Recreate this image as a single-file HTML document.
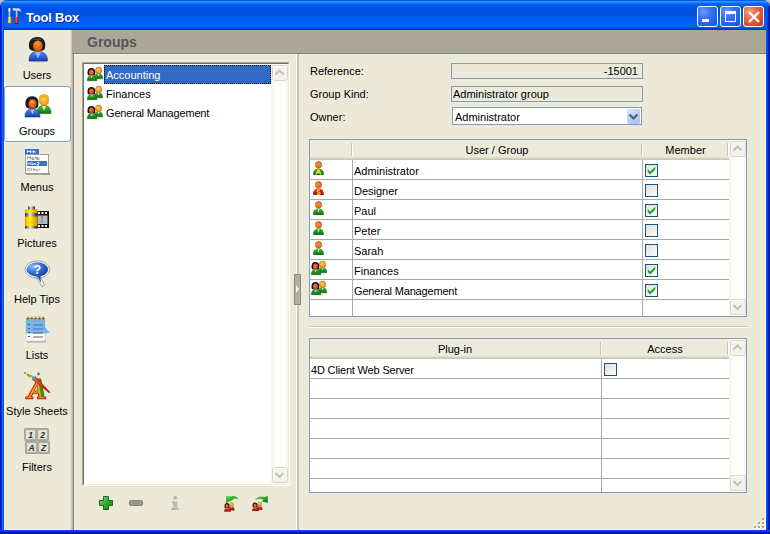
<!DOCTYPE html>
<html><head><meta charset="utf-8">
<style>
*{box-sizing:border-box}
html,body{margin:0;padding:0}
body{width:770px;height:534px;overflow:hidden;position:relative;background:#c4c4c4;font-family:"Liberation Sans",sans-serif;font-size:11px;color:#000}
.a{position:absolute}
.t{position:absolute;white-space:nowrap;line-height:13px}
</style></head><body>
<svg width="0" height="0" style="position:absolute">
<defs>
<radialGradient id="gFaceO" cx="0.4" cy="0.35" r="0.7"><stop offset="0" stop-color="#FFA040"/><stop offset="1" stop-color="#D85010"/></radialGradient>
<radialGradient id="gFaceR" cx="0.4" cy="0.35" r="0.7"><stop offset="0" stop-color="#FF8030"/><stop offset="1" stop-color="#C83008"/></radialGradient>
<radialGradient id="gFaceY" cx="0.4" cy="0.35" r="0.7"><stop offset="0" stop-color="#FFD060"/><stop offset="1" stop-color="#E08A10"/></radialGradient>
<linearGradient id="gGreen" x1="0" y1="0" x2="0" y2="1"><stop offset="0" stop-color="#40B040"/><stop offset="1" stop-color="#087008"/></linearGradient>
<linearGradient id="gBlue" x1="0" y1="0" x2="0" y2="1"><stop offset="0" stop-color="#6090F0"/><stop offset="1" stop-color="#1840B0"/></linearGradient>
<linearGradient id="gRed" x1="0" y1="0" x2="0" y2="1"><stop offset="0" stop-color="#F03020"/><stop offset="1" stop-color="#A00808"/></linearGradient>
<linearGradient id="gChk" x1="0" y1="0" x2="1" y2="1"><stop offset="0" stop-color="#DCDCD7"/><stop offset="1" stop-color="#FFFFFF"/></linearGradient>
<symbol id="uG" viewBox="0 0 16 16"><path d="M2.1 14.2C2 10.4 4.5 8.5 7.5 8.5S13 10.4 12.9 14.2Q12.9 15 12 15H3Q2.1 15 2.1 14.2Z" fill="url(#gGreen)"/><path d="M6.3 9L7.5 13L8.7 9Z" fill="#B8E0A8"/><ellipse cx="7.5" cy="4.8" rx="3.4" ry="3.8" fill="url(#gFaceO)"/><path d="M4.1 5.3C3.5 0.7 11.5 0.7 10.9 5.3C10.5 3.9 9 3.2 7.5 3.4C6 3.2 4.5 3.9 4.1 5.3Z" fill="#B8822C"/></symbol>
<symbol id="uA" viewBox="0 0 16 16"><path d="M2.1 14.2C2 10.4 4.5 8.5 7.5 8.5S13 10.4 12.9 14.2Q12.9 15 12 15H3Q2.1 15 2.1 14.2Z" fill="url(#gGreen)"/><path d="M5 14.5L7.5 9.5L10 14.5M5.8 12.5H9.2" stroke="#F8E020" stroke-width="1.3" fill="none"/><ellipse cx="7.5" cy="4.8" rx="3.4" ry="3.8" fill="url(#gFaceO)"/><path d="M4.1 5.3C3.5 0.7 11.5 0.7 10.9 5.3C10.5 3.9 9 3.2 7.5 3.4C6 3.2 4.5 3.9 4.1 5.3Z" fill="#B8822C"/></symbol>
<symbol id="uS" viewBox="0 0 16 16"><path d="M2.1 14.2C2 10.4 4.5 8.5 7.5 8.5S13 10.4 12.9 14.2Q12.9 15 12 15H3Q2.1 15 2.1 14.2Z" fill="url(#gRed)"/><path d="M9.2 10.3C8 9.5 5.8 9.8 6.2 11.3C6.5 12.3 9 12.2 9 13.4C9 14.6 6.6 14.6 5.8 13.8" stroke="#F8D020" stroke-width="1.4" fill="none"/><ellipse cx="7.5" cy="4.8" rx="3.4" ry="3.8" fill="url(#gFaceO)"/><path d="M4.1 5.3C3.5 0.7 11.5 0.7 10.9 5.3C10.5 3.9 9 3.2 7.5 3.4C6 3.2 4.5 3.9 4.1 5.3Z" fill="#B8822C"/></symbol>
<symbol id="grp" viewBox="0 0 16 16"><path d="M7.3 12.8C7.3 9.2 9 7.6 11.5 7.6S15.7 9.2 15.7 12.8Z" fill="url(#gGreen)" stroke="#0A5A0A" stroke-width="0.5"/><path d="M10.4 7.9L11.5 10.3L12.6 7.9Z" fill="#D0F0C0"/><ellipse cx="11.6" cy="4.4" rx="3.1" ry="3.3" fill="url(#gFaceY)" stroke="#A86A10" stroke-width="0.6"/><path d="M0.3 14.7C0.3 11.2 2 9.4 4.7 9.4S9.9 11.2 9.9 14.7Z" fill="url(#gGreen)" stroke="#0A5A0A" stroke-width="0.5"/><path d="M3.6 9.6L4.7 12.2L5.8 9.6Z" fill="#D0F0C0"/><path d="M0.9 9.3C-0.3 4.5 1.3 2 4.4 2S9.1 4.5 7.9 9.3Z" fill="#151515"/><ellipse cx="4.5" cy="6.6" rx="2.4" ry="3" fill="url(#gFaceR)"/></symbol>
<symbol id="grpR" viewBox="0 0 16 16"><path d="M7.3 12.8C7.3 9.2 9 7.6 11.5 7.6S15.7 9.2 15.7 12.8Z" fill="url(#gRed)" stroke="#700808" stroke-width="0.5"/><path d="M10.4 7.9L11.5 10.3L12.6 7.9Z" fill="#F0C0B0"/><ellipse cx="11.6" cy="4.4" rx="3.1" ry="3.3" fill="url(#gFaceY)" stroke="#A86A10" stroke-width="0.6"/><path d="M0.3 14.7C0.3 11.2 2 9.4 4.7 9.4S9.9 11.2 9.9 14.7Z" fill="url(#gRed)" stroke="#700808" stroke-width="0.5"/><path d="M3.6 9.6L4.7 12.2L5.8 9.6Z" fill="#F0C0B0"/><path d="M0.9 9.3C-0.3 4.5 1.3 2 4.4 2S9.1 4.5 7.9 9.3Z" fill="#151515"/><ellipse cx="4.5" cy="6.6" rx="2.4" ry="3" fill="url(#gFaceR)"/></symbol>
<symbol id="chk" viewBox="0 0 13 13"><rect x="0.5" y="0.5" width="12" height="12" fill="url(#gChk)" stroke="#1C5180"/></symbol>
<symbol id="chkY" viewBox="0 0 13 13"><rect x="0.5" y="0.5" width="12" height="12" fill="url(#gChk)" stroke="#1C5180"/><path d="M2.8 5.3L5.2 7.6L10.2 2.8V5.6L5.2 10.4L2.8 8Z" fill="#21A121"/></symbol>
<symbol id="sbUp" viewBox="0 0 17 17"><rect x="1.5" y="1.5" width="15" height="15" rx="2" fill="#F3F2EB" stroke="#D8D5C6"/><path d="M2.5 14.5V3.5Q2.5 2.5 3.5 2.5H14.5" stroke="#FBFBF8" fill="none"/><path d="M4.5 10.5L8.5 6.5L12.5 10.5" stroke="#C6C3B5" stroke-width="2" fill="none"/></symbol>
<symbol id="sbDn" viewBox="0 0 17 17"><rect x="1.5" y="0.5" width="15" height="15" rx="2" fill="#F3F2EB" stroke="#D8D5C6"/><path d="M2.5 13.5V2.5Q2.5 1.5 3.5 1.5H14.5" stroke="#FBFBF8" fill="none"/><path d="M4.5 6L8.5 10L12.5 6" stroke="#C6C3B5" stroke-width="2" fill="none"/></symbol>
</defs></svg>
<!-- title bar -->
<div class="a" style="left:0;top:0;width:770px;height:30px;border-radius:6px 6px 0 0;background:linear-gradient(to bottom,#0A5AE8 0px,#0A5AE8 1px,#3A90FF 1px,#3A90FF 2px,#2080FF 2px,#2080FF 3px,#0070FA 3px,#0070FA 4px,#0064F4 4px,#005CEC 6px,#0054E0 8px,#0052DC 13px,#0054E0 16px,#005CF0 18px,#0064F8 24px,#0064F8 27px,#0058EE 27px,#0058EE 28px,#0046DC 28px,#0046DC 29px,#0036C4 29px,#0036C4 30px)"></div>
<div class="a" style="left:0;top:6px;width:4px;height:528px;background:linear-gradient(to right,#0018D0 0,#0018D0 1px,#0830DC 1px,#0830DC 2px,#1A6CF0 2px,#1A6CF0 3px,#0050E6 3px)"></div>
<div class="a" style="left:766px;top:6px;width:4px;height:528px;background:linear-gradient(to right,#0058F4 0,#0058F4 1px,#0046E2 1px,#0046E2 2px,#002CC0 2px,#002CC0 3px,#001698 3px)"></div>
<div class="a" style="left:0;top:530px;width:770px;height:4px;background:linear-gradient(to bottom,#0848E8 0,#0848E8 1px,#0038D8 1px,#0038D8 2px,#001CB8 2px,#001CB8 3px,#00138F 3px)"></div>
<!-- title icon -->
<svg class="a" style="left:4px;top:6px" width="20" height="20" viewBox="0 0 20 20">
<defs><linearGradient id="ty" x1="0" y1="0" x2="1" y2="0"><stop offset="0" stop-color="#E8A000"/><stop offset="0.4" stop-color="#FFE040"/><stop offset="1" stop-color="#F0B000"/></linearGradient>
<linearGradient id="tr" x1="0" y1="0" x2="1" y2="0"><stop offset="0" stop-color="#C02000"/><stop offset="0.4" stop-color="#F05030"/><stop offset="1" stop-color="#B01800"/></linearGradient></defs>
<rect x="4.6" y="2.2" width="1.6" height="10" fill="#C8C8D8"/>
<rect x="4.5" y="2.2" width="1.8" height="3" fill="#F8F8FF"/>
<path d="M3.9 11H7.1V12.8L6.6 13.5L7.1 14.2V17.6H3.9V14.2L4.4 13.5L3.9 12.8Z" fill="url(#ty)"/>
<rect x="3.9" y="17" width="3.2" height="0.8" fill="#B04000"/>
<path d="M8.8 2.3C9.5 1.8 10.5 2 11.5 2.3H14.5C16 2.3 17 3.5 17 6.5C16 5 15 4.8 14 4.8H9.5C9 4.8 8.8 4.2 8.8 4Z" fill="#D0D0E0"/>
<rect x="11.8" y="4.5" width="1.6" height="7" fill="#C8C8D8"/>
<rect x="11" y="11" width="3.2" height="6.8" fill="url(#tr)"/>
<rect x="11" y="17" width="3.2" height="0.8" fill="#700000"/>
</svg>
<div class="t" style="left:26px;top:9px;font-size:13px;font-weight:bold;color:#fff;text-shadow:1px 1px 0 #0A1E9A;line-height:17px;letter-spacing:-0.2px">Tool Box</div>
<!-- title buttons -->
<div class="a" style="left:697px;top:6px;width:21px;height:21px;border:1px solid #fff;border-radius:3px;background:radial-gradient(circle at 30% 25%,#6E9BFF 0,#3A72F8 35%,#2260EE 70%,#1A50D8 100%)"><div class="a" style="left:4px;top:12px;width:7px;height:3px;background:#fff"></div></div>
<div class="a" style="left:720px;top:6px;width:21px;height:21px;border:1px solid #fff;border-radius:3px;background:radial-gradient(circle at 30% 25%,#6E9BFF 0,#3A72F8 35%,#2260EE 70%,#1A50D8 100%)"><div class="a" style="left:4px;top:4px;width:11px;height:11px;border:1px solid #fff;border-top-width:3px"></div></div>
<div class="a" style="left:743px;top:6px;width:21px;height:21px;border:1px solid #fff;border-radius:3px;background:radial-gradient(circle at 30% 25%,#F0A080 0,#E56840 40%,#D84A1C 75%,#C83C10 100%)">
<svg class="a" style="left:3.5px;top:3.5px" width="12" height="12" viewBox="0 0 12 12"><path d="M1 1L11 11M11 1L1 11" stroke="#fff" stroke-width="2.4"/></svg></div>

<!-- client -->
<div class="a" style="left:4px;top:30px;width:762px;height:500px;background:#ECE9D8"></div>
<div class="a" style="left:4px;top:30px;width:1px;height:500px;background:#FFF8DC"></div>
<div class="a" style="left:4px;top:529px;width:762px;height:1px;background:#FFF5D8"></div>
<div class="a" style="left:765px;top:54px;width:1px;height:476px;background:#FFF5D8"></div>
<!-- sidebar separator -->
<div class="a" style="left:70px;top:30px;width:3px;height:500px;background:linear-gradient(to right,#E2DFD0 0,#E2DFD0 1px,#CFCBBB 1px,#CFCBBB 2px,#B8B5A6 2px)"></div>
<!-- header band -->
<div class="a" style="left:72px;top:30px;width:694px;height:23px;background:#ACA899"></div>
<div class="a" style="left:72px;top:53px;width:694px;height:1px;background:#86847A"></div>
<div class="a" style="left:73px;top:53px;width:1px;height:477px;background:#86847A"></div>
<div class="a" style="left:74px;top:54px;width:1px;height:475px;background:#F6F4EA"></div>
<div class="a" style="left:74px;top:54px;width:222px;height:1px;background:#F6F4EA"></div>
<div class="t" style="left:87px;top:34px;font-size:14px;font-weight:bold;color:#56565A;line-height:16px">Groups</div>
<!-- sidebar tabs -->
<div class="a" style="left:4px;top:86px;width:67px;height:56px;background:#fff;border:1px solid #84A0BA;border-radius:3px"></div>
<div id="tabs">
<div class="t" style="left:4px;top:69px;width:66px;text-align:center">Users</div>
<div class="t" style="left:4px;top:125px;width:66px;text-align:center">Groups</div>
<div class="t" style="left:4px;top:181px;width:66px;text-align:center">Menus</div>
<div class="t" style="left:4px;top:237px;width:66px;text-align:center">Pictures</div>
<div class="t" style="left:4px;top:293px;width:66px;text-align:center">Help Tips</div>
<div class="t" style="left:4px;top:349px;width:66px;text-align:center">Lists</div>
<div class="t" style="left:4px;top:405px;width:66px;text-align:center">Style Sheets</div>
<div class="t" style="left:4px;top:461px;width:66px;text-align:center">Filters</div>
<svg class="a" style="left:21px;top:35px" width="32" height="28" viewBox="0 0 32 28">
<defs><radialGradient id="wf" cx="0.45" cy="0.3" r="0.75"><stop offset="0" stop-color="#FF9A30"/><stop offset="1" stop-color="#D03808"/></radialGradient>
<linearGradient id="wb" x1="0" y1="0" x2="0" y2="1"><stop offset="0" stop-color="#5A8CF0"/><stop offset="1" stop-color="#1C3CB0"/></linearGradient></defs>
<ellipse cx="17" cy="26.2" rx="9" ry="1.2" fill="#000" opacity="0.15"/>
<path d="M8 26C8 19 11.5 16.5 17 16.5S26.5 19 26.5 26Z" fill="url(#wb)" stroke="#1A3090" stroke-width="0.6"/>
<path d="M14.2 17L17 23.5L19.8 17Z" fill="#8CC8F8"/>
<path d="M8.5 14C6.5 7 9.5 2 16.5 2C23 2 25.5 7 23.8 14C22 17 11 17 8.5 14Z" fill="#1A1A1A"/>
<path d="M11 5.5C13 3 20 3 22 5.5C20 4.2 13 4.2 11 5.5Z" fill="#707070"/>
<ellipse cx="16.8" cy="11" rx="4.8" ry="5.6" fill="url(#wf)"/>
</svg>
<svg class="a" style="left:21px;top:92px" width="32" height="28" viewBox="0 0 32 28">
<defs><radialGradient id="mf" cx="0.45" cy="0.3" r="0.75"><stop offset="0" stop-color="#FFD860"/><stop offset="1" stop-color="#E88A08"/></radialGradient>
<linearGradient id="mb" x1="0" y1="0" x2="0" y2="1"><stop offset="0" stop-color="#48C048"/><stop offset="1" stop-color="#0A780A"/></linearGradient></defs>
<path d="M16 21.5C16 15.5 19 13.5 23 13.5S30 15.5 30 21.5Z" fill="url(#mb)" stroke="#0A5A0A" stroke-width="0.6"/>
<path d="M21 14L23 19L25 14Z" fill="#D8F0C8"/>
<ellipse cx="23" cy="8.5" rx="4.6" ry="5.3" fill="url(#mf)" stroke="#C07010" stroke-width="0.5"/>
<path d="M18.2 7.5C17.5 3 20 2.2 23 2.2S28.5 3 27.8 7.5C27 5 19 5 18.2 7.5Z" fill="#F0B020"/>
<path d="M4 25C4 19 7 17 11.5 17S19 19 19 25Z" fill="url(#wb)" stroke="#1A3090" stroke-width="0.6"/>
<path d="M9.5 17.5L11.5 22.5L13.5 17.5Z" fill="#8CC8F8"/>
<path d="M5 15C3 8.5 6 4.2 11.3 4.2C16.5 4.2 18.5 8.5 17 15C15.5 17.5 7 17.5 5 15Z" fill="#1A1A1A"/>
<ellipse cx="11.5" cy="12" rx="4" ry="4.8" fill="url(#wf)"/>
</svg>
<svg class="a" style="left:24px;top:148px" width="28" height="29" viewBox="0 0 28 29">
<rect x="1" y="1" width="14" height="5" fill="#3A70D0"/>
<path d="M3.5 4.8V2.5L5 4L6.5 2.5V4.8M8 2.8V4.8M9.5 2.5V4.8M9.5 3.5H11V4.8" stroke="#fff" stroke-width="0.9" fill="none"/>
<rect x="2" y="24.5" width="24" height="2.5" fill="#8A887A" opacity="0.8"/>
<rect x="1.5" y="6.5" width="23" height="19" fill="#fff" stroke="#A09E90"/>
<path d="M3.5 11.5V8.5L5 10L6.5 8.5V11.5M8 10H10M8 9V11.5H10M11 11.5V9.3H12.5V11.5M13.5 9.3V11.5H15V9.3" stroke="#808080" stroke-width="0.8" fill="none"/>
<rect x="3" y="13" width="20" height="5" fill="#3A70D0"/>
<path d="M4 17V14.5L5.5 16L7 14.5V17M8.5 15V17M10 15V17M10 15.5H11.5V17M13 14.5H15V15.5L13 17H15" stroke="#fff" stroke-width="0.8" fill="none"/>
<path d="M3.5 20.5H6V23H3.5ZM7.5 20H7.5V23M6.8 21H8.5M9.5 20V23M9.5 21.5H11V23M12 22H14M12 21V23H14M15 23V21.3H16.5" stroke="#A0A0A0" stroke-width="0.8" fill="none"/>
</svg>
<svg class="a" style="left:24px;top:205px" width="28" height="26" viewBox="0 0 28 26">
<defs><linearGradient id="cy" x1="0" y1="0" x2="1" y2="0"><stop offset="0" stop-color="#F08010"/><stop offset="0.15" stop-color="#FFD000"/><stop offset="0.4" stop-color="#FFF000"/><stop offset="1" stop-color="#D89000"/></linearGradient>
<linearGradient id="cg" x1="0" y1="0" x2="1" y2="0"><stop offset="0" stop-color="#282828"/><stop offset="0.4" stop-color="#E8E8E8"/><stop offset="1" stop-color="#202020"/></linearGradient></defs>
<rect x="12.5" y="6" width="12.5" height="17" fill="#101010"/>
<rect x="14" y="7" width="2" height="2" fill="#fff"/><rect x="17.5" y="7" width="2" height="2" fill="#fff"/><rect x="21" y="7" width="2" height="2" fill="#fff"/>
<rect x="14" y="20" width="2" height="2" fill="#fff"/><rect x="17.5" y="20" width="2" height="2" fill="#fff"/><rect x="21" y="20" width="2" height="2" fill="#fff"/>
<rect x="13.5" y="10.5" width="10" height="8.5" fill="#B8BCC0"/>
<rect x="17" y="12" width="2" height="6" fill="#70A0E0"/><rect x="17" y="11" width="2" height="2" fill="#F06070"/>
<rect x="4" y="1.5" width="7" height="3.5" fill="url(#cg)"/>
<rect x="1" y="4.5" width="12.5" height="19" fill="url(#cy)"/>
<rect x="1" y="8" width="12.5" height="3.5" fill="url(#cg)"/>
<rect x="1" y="21" width="12.5" height="2.5" fill="url(#cg)"/>
</svg>
<svg class="a" style="left:23px;top:259px" width="30" height="30" viewBox="0 0 30 30">
<defs><radialGradient id="hb" cx="0.3" cy="0.3" r="0.8"><stop offset="0" stop-color="#90B8F8"/><stop offset="0.5" stop-color="#3A70D8"/><stop offset="1" stop-color="#0A3AA8"/></radialGradient></defs>
<path d="M12 17L19 27.5L21.5 26.5L17.5 17Z" fill="#fff" stroke="#909090" stroke-width="0.8"/>
<ellipse cx="14.3" cy="10.5" rx="12.3" ry="8.6" fill="#fff" stroke="#8A8A8A" stroke-width="0.8"/>
<ellipse cx="14.3" cy="10.5" rx="10.8" ry="7.2" fill="url(#hb)"/>
<path d="M13 16L18 24L17.5 16Z" fill="#2A5AC0"/>
<text x="14.3" y="15" font-family="Liberation Sans" font-weight="bold" font-size="12.5" fill="#fff" text-anchor="middle">?</text>
</svg>
<svg class="a" style="left:24px;top:315px" width="30" height="30" viewBox="0 0 30 30">
<rect x="3" y="25" width="19" height="2.5" fill="#8A887A" opacity="0.6"/>
<rect x="2" y="3" width="19" height="23" fill="#fff" stroke="#C8C8C8" stroke-width="0.6"/>
<path d="M2 3H21V12C23 15 25 17 27 17.5L21 18.5H2Z" fill="#78B4E8"/>
<path d="M9 10H19M9 14H19" stroke="#3A78B8" stroke-width="1.2"/>
<path d="M9 18H19M9 22H19" stroke="#606060" stroke-width="1.2"/>
<path d="M4 9.5h2M4 13.5h2M4 17.5h2M4 21.5h2" stroke="#505050" stroke-width="1.2"/>
<g fill="#D0A020"><rect x="3" y="1.5" width="2" height="4"/><rect x="6.8" y="1.5" width="2" height="4"/><rect x="10.6" y="1.5" width="2" height="4"/><rect x="14.4" y="1.5" width="2" height="4"/><rect x="18.2" y="1.5" width="2" height="4"/></g>
<g fill="#303030"><rect x="3.5" y="3" width="1.2" height="1.2"/><rect x="7.3" y="3" width="1.2" height="1.2"/><rect x="11.1" y="3" width="1.2" height="1.2"/><rect x="14.9" y="3" width="1.2" height="1.2"/><rect x="18.7" y="3" width="1.2" height="1.2"/></g>
</svg>
<svg class="a" style="left:20px;top:368px" width="36" height="36" viewBox="0 0 36 36">
<defs><linearGradient id="ssy" x1="0" y1="0" x2="0" y2="1"><stop offset="0" stop-color="#FFE040"/><stop offset="1" stop-color="#F89010"/></linearGradient>
<linearGradient id="ssr" x1="0" y1="0" x2="1" y2="0"><stop offset="0" stop-color="#F06030"/><stop offset="1" stop-color="#C01000"/></linearGradient></defs>
<path d="M5.8 30.8H12.8V29.2L11.4 28.8L12.8 25.2H18.2L19 28.8L17.6 29.2V30.8H25.6V29.2L24 28.8L20.6 11H17.8L8 28.8L5.8 29.2Z" fill="url(#ssy)" stroke="#C01808" stroke-width="1.1" stroke-linejoin="round"/>
<path d="M17.8 11.2H20.5L24 28.8L21.2 29.2Z" fill="#18A018"/>
<path d="M13.8 23H17.8L17.2 16.5Z" fill="#ECE9D8" stroke="#C01808" stroke-width="0.8"/>
<path d="M12.2 11.4L15.3 8.4L30 24.3L29.2 24.8Z" fill="url(#ssr)" stroke="#901008" stroke-width="0.5"/>
<ellipse cx="13.6" cy="10" rx="2.1" ry="1.5" transform="rotate(45 13.6 10)" fill="#30A8F0"/>
<path d="M12.6 8.6C10.5 10.5 7 9.5 7 5.8C8.8 6.8 11.5 7 13 8Z" fill="#D8A418"/>
<path d="M7 5.8C7.5 7 8.5 7.5 9.5 7.5" stroke="#40A020" stroke-width="1.2" fill="none"/>
<circle cx="5" cy="5" r="0.9" fill="#30A030"/><circle cx="18.5" cy="6" r="1.4" fill="#30A030"/>
</svg>
<svg class="a" style="left:23px;top:427px" width="28" height="29" viewBox="0 0 28 29">
<g stroke="#9A988A" stroke-width="1" fill="#E4E4E0">
<rect x="1.5" y="1.5" width="12" height="12" rx="1"/><rect x="13.5" y="1.5" width="12" height="12" rx="1"/>
<rect x="2.5" y="14.5" width="12" height="12" rx="1"/><rect x="14.5" y="14.5" width="12" height="12" rx="1"/></g>
<g fill="none" stroke="#B0AE9E" stroke-width="1.6">
<rect x="2.3" y="2.3" width="10.4" height="10.4"/><rect x="14.3" y="2.3" width="10.4" height="10.4"/>
<rect x="3.3" y="15.3" width="10.4" height="10.4"/><rect x="15.3" y="15.3" width="10.4" height="10.4"/></g>
<g font-family="Liberation Sans" font-style="italic" font-weight="bold" font-size="8.5" fill="#303030" text-anchor="middle">
<text x="7.5" y="10.5">1</text><text x="19.5" y="10.5">2</text><text x="8.5" y="23.5">A</text><text x="20.5" y="23.5">Z</text></g>
</svg>
</div>
<!-- group list -->
<div class="a" style="left:82px;top:62px;width:208px;height:424px;border-top:1px solid #ACA899;border-left:1px solid #ACA899;border-right:1px solid #fff;border-bottom:1px solid #fff"></div>
<div class="a" style="left:83px;top:63px;width:206px;height:422px;border-top:1px solid #716F64;border-left:1px solid #716F64;border-right:1px solid #F1EFE2;border-bottom:1px solid #F1EFE2;background:#fff"></div>
<div class="a" style="left:271px;top:64px;width:17px;height:420px;background:linear-gradient(to right,#F4F3EE,#FEFEFB 25%,#FEFEFB 80%,#F4F3EE)"></div>
<div id="groups">
<div class="a" style="left:104px;top:65px;width:167px;height:19px;background:#316AC5;outline:1px dotted #000;outline-offset:-1px"></div>
<svg class="a" style="left:87px;top:66px" width="16" height="16"><use href="#grp"/></svg>
<div class="t" style="left:106px;top:69px;color:#fff">Accounting</div>
<svg class="a" style="left:87px;top:85px" width="16" height="16"><use href="#grp"/></svg>
<div class="t" style="left:106px;top:88px;color:#000">Finances</div>
<svg class="a" style="left:87px;top:104px" width="16" height="16"><use href="#grp"/></svg>
<div class="t" style="left:106px;top:107px;color:#000;letter-spacing:-0.18px">General Management</div>
<svg class="a" style="left:271px;top:64px" width="17" height="17"><use href="#sbUp"/></svg>
<svg class="a" style="left:271px;top:467px" width="17" height="17"><use href="#sbDn"/></svg>
</div>
<!-- splitter -->
<div class="a" style="left:296px;top:54px;width:1px;height:476px;background:#fff"></div>
<div class="a" style="left:297px;top:54px;width:2px;height:476px;background:#CAC6B6"></div>
<div class="a" style="left:294px;top:274px;width:7px;height:31px;background:#B2AFA0;border:1px solid #8E8B7E"></div>
<svg class="a" style="left:295px;top:284px" width="5" height="10"><path d="M1 1L4 5L1 9Z" fill="#fff"/></svg>
<div id="form">
<div class="t" style="left:310px;top:65px">Reference:</div>
<div class="t" style="left:310px;top:88px">Group Kind:</div>
<div class="t" style="left:310px;top:111px">Owner:</div>
<div class="a" style="left:451px;top:63px;width:192px;height:16px;border:1px solid #7F9DB9"></div>
<div class="t" style="left:451px;top:65px;width:187px;text-align:right">-15001</div>
<div class="a" style="left:451px;top:86px;width:192px;height:16px;border:1px solid #7F9DB9"></div>
<div class="t" style="left:453px;top:88px">Administrator group</div>
<div class="a" style="left:452px;top:107px;width:190px;height:18px;border:1px solid #7F9DB9;background:#fff"></div>
<div class="t" style="left:455px;top:111px">Administrator</div>
<div class="a" style="left:627px;top:109px;width:13px;height:15px;border-radius:2px;background:linear-gradient(135deg,#DCE6FC,#B6CAF8 60%,#AAC0F4)"></div>
<svg class="a" style="left:627px;top:109px" width="13" height="15"><path d="M2.5 5.5L6.5 9.5L10.5 5.5" stroke="#4D6185" stroke-width="2.2" fill="none"/></svg>
</div>
<div id="tbl1">
<div class="a" style="left:309px;top:139px;width:438px;height:178px;border:1px solid #7F9DB9;background:#fff"></div>
<div class="a" style="left:310px;top:140px;width:419px;height:20px;background:linear-gradient(to bottom,#EBEADB 0,#EBEADB 17px,#E2DECD 17px,#E2DECD 18px,#D6D2C2 18px,#D6D2C2 19px,#CBC7B8 19px)"></div>
<div class="a" style="left:351px;top:143px;width:1px;height:13px;background:#C7C5B2"></div>
<div class="a" style="left:352px;top:143px;width:1px;height:13px;background:#fff"></div>
<div class="a" style="left:641px;top:143px;width:1px;height:13px;background:#C7C5B2"></div>
<div class="a" style="left:642px;top:143px;width:1px;height:13px;background:#fff"></div>
<div class="t" style="left:353px;top:144px;width:288px;text-align:center">User / Group</div>
<div class="t" style="left:643px;top:144px;width:85px;text-align:center">Member</div>
<div class="a" style="left:310px;top:179px;width:419px;height:1px;background:#A9A9A9"></div>
<div class="a" style="left:310px;top:199px;width:419px;height:1px;background:#A9A9A9"></div>
<div class="a" style="left:310px;top:219px;width:419px;height:1px;background:#A9A9A9"></div>
<div class="a" style="left:310px;top:239px;width:419px;height:1px;background:#A9A9A9"></div>
<div class="a" style="left:310px;top:259px;width:419px;height:1px;background:#A9A9A9"></div>
<div class="a" style="left:310px;top:279px;width:419px;height:1px;background:#A9A9A9"></div>
<div class="a" style="left:310px;top:299px;width:419px;height:1px;background:#A9A9A9"></div>
<div class="a" style="left:352px;top:160px;width:1px;height:156px;background:#A9A9A9"></div>
<div class="a" style="left:642px;top:160px;width:1px;height:156px;background:#A9A9A9"></div>
<div class="a" style="left:729px;top:140px;width:17px;height:176px;background:linear-gradient(to right,#F4F3EE,#FEFEFB 25%,#FEFEFB 80%,#F4F3EE)"></div>
</div>
<div id="tbl2">
<div class="a" style="left:309px;top:338px;width:438px;height:155px;border:1px solid #7F9DB9;background:#fff"></div>
<div class="a" style="left:310px;top:339px;width:419px;height:20px;background:linear-gradient(to bottom,#EBEADB 0,#EBEADB 17px,#E2DECD 17px,#E2DECD 18px,#D6D2C2 18px,#D6D2C2 19px,#CBC7B8 19px)"></div>
<div class="a" style="left:600px;top:342px;width:1px;height:13px;background:#C7C5B2"></div>
<div class="a" style="left:601px;top:342px;width:1px;height:13px;background:#fff"></div>
<div class="t" style="left:310px;top:343px;width:290px;text-align:center">Plug-in</div>
<div class="t" style="left:602px;top:343px;width:126px;text-align:center">Access</div>
<div class="a" style="left:310px;top:378px;width:419px;height:1px;background:#A9A9A9"></div>
<div class="a" style="left:310px;top:398px;width:419px;height:1px;background:#A9A9A9"></div>
<div class="a" style="left:310px;top:418px;width:419px;height:1px;background:#A9A9A9"></div>
<div class="a" style="left:310px;top:438px;width:419px;height:1px;background:#A9A9A9"></div>
<div class="a" style="left:310px;top:458px;width:419px;height:1px;background:#A9A9A9"></div>
<div class="a" style="left:310px;top:478px;width:419px;height:1px;background:#A9A9A9"></div>
<div class="a" style="left:601px;top:359px;width:1px;height:133px;background:#A9A9A9"></div>
<div class="a" style="left:729px;top:339px;width:17px;height:153px;background:linear-gradient(to right,#F4F3EE,#FEFEFB 25%,#FEFEFB 80%,#F4F3EE)"></div>
</div>
<div id="rows1">
<svg class="a" style="left:311px;top:160px" width="16" height="16"><use href="#uA"/></svg>
<div class="t" style="left:354px;top:165px">Administrator</div>
<svg class="a" style="left:645px;top:164px" width="13" height="13"><use href="#chkY"/></svg>
<svg class="a" style="left:311px;top:180px" width="16" height="16"><use href="#uS"/></svg>
<div class="t" style="left:354px;top:185px">Designer</div>
<svg class="a" style="left:645px;top:184px" width="13" height="13"><use href="#chk"/></svg>
<svg class="a" style="left:311px;top:200px" width="16" height="16"><use href="#uG"/></svg>
<div class="t" style="left:354px;top:205px">Paul</div>
<svg class="a" style="left:645px;top:204px" width="13" height="13"><use href="#chkY"/></svg>
<svg class="a" style="left:311px;top:220px" width="16" height="16"><use href="#uG"/></svg>
<div class="t" style="left:354px;top:225px">Peter</div>
<svg class="a" style="left:645px;top:224px" width="13" height="13"><use href="#chk"/></svg>
<svg class="a" style="left:311px;top:240px" width="16" height="16"><use href="#uG"/></svg>
<div class="t" style="left:354px;top:245px">Sarah</div>
<svg class="a" style="left:645px;top:244px" width="13" height="13"><use href="#chk"/></svg>
<svg class="a" style="left:311px;top:260px" width="16" height="16"><use href="#grp"/></svg>
<div class="t" style="left:354px;top:265px">Finances</div>
<svg class="a" style="left:645px;top:264px" width="13" height="13"><use href="#chkY"/></svg>
<svg class="a" style="left:311px;top:280px" width="16" height="16"><use href="#grp"/></svg>
<div class="t" style="left:354px;top:285px;letter-spacing:-0.18px">General Management</div>
<svg class="a" style="left:645px;top:284px" width="13" height="13"><use href="#chkY"/></svg>
<svg class="a" style="left:729px;top:140px" width="17" height="17"><use href="#sbUp"/></svg>
<svg class="a" style="left:729px;top:299px" width="17" height="17"><use href="#sbDn"/></svg>
<div class="a" style="left:310px;top:326px;width:437px;height:1px;background:#C5C2B2"></div>
<div class="a" style="left:310px;top:327px;width:437px;height:1px;background:#fff"></div>
<div class="t" style="left:311px;top:364px;letter-spacing:-0.17px">4D Client Web Server</div>
<svg class="a" style="left:604px;top:363px" width="13" height="13"><use href="#chk"/></svg>
<svg class="a" style="left:729px;top:339px" width="17" height="17"><use href="#sbUp"/></svg>
<svg class="a" style="left:729px;top:475px" width="17" height="17"><use href="#sbDn"/></svg>
</div>
<div class="a" style="left:727px;top:143px;width:1px;height:13px;background:#C7C5B2"></div><div class="a" style="left:728px;top:143px;width:1px;height:13px;background:#fff"></div>
<div class="a" style="left:727px;top:342px;width:1px;height:13px;background:#C7C5B2"></div><div class="a" style="left:728px;top:342px;width:1px;height:13px;background:#fff"></div>
<div class="a" style="left:763px;top:519px;width:2px;height:2px;background:#fff"></div><div class="a" style="left:762px;top:518px;width:2px;height:2px;background:#A8A494"></div>
<div class="a" style="left:759px;top:523px;width:2px;height:2px;background:#fff"></div><div class="a" style="left:758px;top:522px;width:2px;height:2px;background:#A8A494"></div>
<div class="a" style="left:763px;top:523px;width:2px;height:2px;background:#fff"></div><div class="a" style="left:762px;top:522px;width:2px;height:2px;background:#A8A494"></div>
<div class="a" style="left:755px;top:527px;width:2px;height:2px;background:#fff"></div><div class="a" style="left:754px;top:526px;width:2px;height:2px;background:#A8A494"></div>
<div class="a" style="left:759px;top:527px;width:2px;height:2px;background:#fff"></div><div class="a" style="left:758px;top:526px;width:2px;height:2px;background:#A8A494"></div>
<div class="a" style="left:763px;top:527px;width:2px;height:2px;background:#fff"></div><div class="a" style="left:762px;top:526px;width:2px;height:2px;background:#A8A494"></div>
<div id="toolbar">
<svg class="a" style="left:98px;top:495px" width="17" height="17" viewBox="0 0 17 17">
<defs><linearGradient id="pg" x1="0" y1="0" x2="1" y2="1"><stop offset="0" stop-color="#80E070"/><stop offset="0.5" stop-color="#30B030"/><stop offset="1" stop-color="#108010"/></linearGradient></defs>
<path d="M5.5 1.5H10.5V5.5H14.5V10.5H10.5V14.5H5.5V10.5H1.5V5.5H5.5Z" fill="url(#pg)" stroke="#206020" stroke-width="1" stroke-linejoin="round"/>
</svg>
<svg class="a" style="left:128px;top:499px" width="16" height="8" viewBox="0 0 16 8">
<rect x="1.5" y="1.5" width="13" height="5" rx="1.5" fill="#9C9A90" stroke="#858378" stroke-width="1"/>
</svg>
<svg class="a" style="left:170px;top:495px" width="11" height="17" viewBox="0 0 11 17">
<defs><linearGradient id="ig" x1="0" y1="0" x2="1" y2="0"><stop offset="0" stop-color="#A8A69C"/><stop offset="1" stop-color="#D0CEC4"/></linearGradient></defs>
<rect x="3.5" y="1" width="4" height="3.5" rx="1.5" fill="url(#ig)"/>
<path d="M2 6.5H7.5V13H9.5V15H1.5V13H3.5V8.5H2Z" fill="url(#ig)"/>
</svg>
<svg class="a" style="left:220px;top:492px" width="24" height="24" viewBox="0 0 24 24">
<defs><linearGradient id="ag" x1="0" y1="0" x2="1" y2="1"><stop offset="0" stop-color="#60D050"/><stop offset="0.6" stop-color="#20A020"/><stop offset="1" stop-color="#087808"/></linearGradient></defs>
<path d="M6 4L10.5 4.6C13.5 3.4 16.5 4.3 18.7 7C16.3 6.1 13.8 6.2 12.2 8.2L6 11.3Z" fill="url(#ag)"/>
<g transform="translate(4.1,9.8) scale(0.66)"><use href="#grpR" width="16" height="16"/></g>
</svg>
<svg class="a" style="left:248px;top:492px" width="24" height="24" viewBox="0 0 24 24">
<path d="M19.8 4L19.8 10.9L14 9.4L15.3 7.6C12.8 6.3 10 6.6 7 7.9C9 5 12.5 3.6 16.2 5.1Z" fill="url(#ag)"/>
<g transform="translate(4.1,9.2) scale(0.66)"><use href="#grpR" width="16" height="16"/></g>
</svg>
</div>
</body></html>
